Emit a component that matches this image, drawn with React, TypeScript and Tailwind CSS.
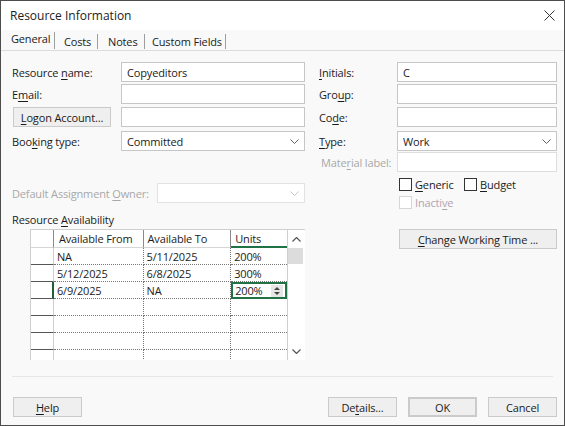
import React from "react";

const U = ({ children }: { children: React.ReactNode }) => (
  <span className="underline underline-offset-2">{children}</span>
);

const Chevron = ({ disabled }: { disabled?: boolean }) => (
  <svg width="9" height="5" viewBox="0 0 9 5" className="shrink-0">
    <path
      d="M0.5 0.5 L4.5 4.5 L8.5 0.5"
      fill="none"
      stroke={disabled ? "#c8c8c8" : "#606060"}
      strokeWidth="1"
    />
  </svg>
);

const Field = ({ value, className = "" }: { value?: string; className?: string }) => (
  <div
    className={`h-5 flex-1 flex items-center bg-white border border-[#c6c6c6] px-[5px] ${className}`}
  >
    {value}
  </div>
);

const Select = ({ value, disabled }: { value?: string; disabled?: boolean }) => (
  <div
    className={`h-5 flex-1 flex items-center justify-between bg-white border pl-[5px] pr-[5px] ${
      disabled ? "border-[#e2e2e2]" : "border-[#c6c6c6]"
    }`}
  >
    <span>{value}</span>
    <Chevron disabled={disabled} />
  </div>
);

const Btn = ({
  children,
  className = "",
}: {
  children: React.ReactNode;
  className?: string;
}) => (
  <div
    className={`h-5 flex items-center justify-center bg-[#efefef] border border-[#cbcbcb] ${className}`}
  >
    {children}
  </div>
);

const Check = ({ disabled }: { disabled?: boolean }) => (
  <div
    className={`w-[13px] h-[13px] bg-white border ${
      disabled ? "border-[#d6d6d6]" : "border-[#333]"
    }`}
  />
);

const rows: string[][] = [
  ["NA", "5/11/2025", "200%"],
  ["5/12/2025", "6/8/2025", "300%"],
  ["6/9/2025", "NA", "200%"],
  ["", "", ""],
  ["", "", ""],
  ["", "", ""],
  ["", "", ""],
];

const AvailabilityGrid = () => (
  <div className="ml-[18px] mt-[3px] w-[275px] h-[131px] flex border-l border-t border-[#cfcfcf] overflow-hidden">
    <div className="w-[257px] flex flex-col border-r border-[#cfcfcf] bg-white">
      <div className="h-[18px] flex shrink-0">
        <div className="w-[23px] border-r border-b border-r-[#8a8a8a] border-b-[#d6d6d6]" />
        <div className="w-[90px] px-[5px] flex items-center border-r border-b border-r-[#8a8a8a] border-b-[#d6d6d6]">
          Available From
        </div>
        <div className="w-[88px] px-[4px] flex items-center border-r border-b border-r-[#8a8a8a] border-b-[#d6d6d6]">
          Available To
        </div>
        <div className="w-[56px] px-[4px] flex items-center border-b-2 border-[#217346]">
          Units
        </div>
      </div>
      {rows.map((r, i) => (
        <div key={i} className="h-[17px] flex shrink-0">
          <div
            className={`w-[23px] border-b border-b-[#555] ${
              i === 2 ? "border-r-2 border-r-[#1f5f3a]" : "border-r border-r-[#cfcfcf]"
            }`}
          />
          <div className="w-[90px] px-[3px] flex items-center border-b border-r border-dotted border-[#777]">
            {r[0]}
          </div>
          <div className="w-[88px] px-[3px] flex items-center border-b border-r border-dotted border-[#777]">
            {r[1]}
          </div>
          {i === 2 ? (
            <div className="w-[56px] flex items-center justify-between border-2 border-[#217346] pl-[2px] pr-[2px]">
              <span>{r[2]}</span>
              <div className="w-[12px] h-[12px] bg-[#e6e6e6] flex flex-col items-center justify-center gap-[2px]">
                <svg width="6" height="3" viewBox="0 0 6 3">
                  <path d="M0 3 L3 0 L6 3 Z" fill="#444" />
                </svg>
                <svg width="6" height="3" viewBox="0 0 6 3">
                  <path d="M0 0 L3 3 L6 0 Z" fill="#444" />
                </svg>
              </div>
            </div>
          ) : (
            <div className="w-[56px] px-[3px] flex items-center border-b border-dotted border-[#777]">
              {r[2]}
            </div>
          )}
        </div>
      ))}
    </div>
    <div className="w-[18px] flex flex-col bg-white">
      <div className="h-[18px] flex items-center justify-center">
        <svg width="9" height="5" viewBox="0 0 9 5">
          <path d="M0.5 4.5 L4.5 0.5 L8.5 4.5" fill="none" stroke="#555" strokeWidth="1.2" />
        </svg>
      </div>
      <div className="h-[16px] w-[15px] bg-[#dcdcdc]" />
      <div className="flex-1" />
      <div className="h-[18px] flex items-center justify-center">
        <svg width="9" height="5" viewBox="0 0 9 5">
          <path d="M0.5 0.5 L4.5 4.5 L8.5 0.5" fill="none" stroke="#555" strokeWidth="1.2" />
        </svg>
      </div>
    </div>
  </div>
);

export default function App() {
  return (
    <div className="w-[565px] h-[426px] flex flex-col border border-[#4d4d4d] bg-[#f9f9f9] text-[11px] tracking-[-0.15px] text-[#1b1b1b] font-['Open_Sans',sans-serif] leading-none">
      {/* title bar */}
      <div className="h-[29px] shrink-0 bg-white flex items-center justify-between pl-[9px] pr-[9px]">
        <span className="text-[12px] tracking-normal text-[#222]">Resource Information</span>
        <svg width="11" height="11" viewBox="0 0 11 11">
          <path d="M0.5 0.5 L10.5 10.5 M10.5 0.5 L0.5 10.5" stroke="#333" strokeWidth="1" />
        </svg>
      </div>

      {/* tabs */}
      <div className="h-[21px] shrink-0 flex items-end pl-[5px] border-b border-[#dcdcdc]">
        <div className="w-[49px] h-[17px] pl-[5px] pt-[1px] mb-px border-r border-[#9e9e9e] self-end">
          General
        </div>
        <div className="w-[43px] h-[15px] pl-[9px] pt-[2px] border-r border-[#9e9e9e] mb-px">Costs</div>
        <div className="w-[47px] h-[15px] pl-[10px] pt-[2px] border-r border-[#9e9e9e] mb-px">Notes</div>
        <div className="w-[81px] h-[15px] pl-[7px] pt-[2px] border-r border-[#9e9e9e] mb-px">
          Custom Fields
        </div>
      </div>

      {/* general pane */}
      <div className="h-[325px] shrink-0 flex pt-[11px] pl-[11px]">
        <div className="w-[293px] flex flex-col">
          <div className="flex items-center">
            <span className="w-[109px]">
              Resource <U>n</U>ame:
            </span>
            <Field value="Copyeditors" />
          </div>
          <div className="flex items-center mt-[2px]">
            <span className="w-[109px]">
              E<U>m</U>ail:
            </span>
            <Field />
          </div>
          <div className="flex items-center mt-[3px]">
            <Btn className="ml-px w-[98px] mr-[10px]">
              <span>
                <U>L</U>ogon Account...
              </span>
            </Btn>
            <Field />
          </div>
          <div className="flex items-center mt-[4px]">
            <span className="w-[109px]">
              Boo<U>k</U>ing type:
            </span>
            <Select value="Committed" />
          </div>
          <div className="flex items-center mt-[32px] text-[#a8a8a8]">
            <span className="w-[145px]">
              Default Assignment <U>O</U>wner:
            </span>
            <Select disabled />
          </div>
          <div className="mt-[9px] h-[14px] flex items-center">
            <span>
              Resource <U>A</U>vailability
            </span>
          </div>
          <AvailabilityGrid />
        </div>

        <div className="w-[238px] ml-[14px] flex flex-col">
          <div className="flex items-center">
            <span className="w-[78px]">
              <U>I</U>nitials:
            </span>
            <Field value="C" />
          </div>
          <div className="flex items-center mt-[2px]">
            <span className="w-[78px]">
              Gro<U>u</U>p:
            </span>
            <Field />
          </div>
          <div className="flex items-center mt-[3px]">
            <span className="w-[78px]">
              Co<U>d</U>e:
            </span>
            <Field />
          </div>
          <div className="flex items-center mt-[4px]">
            <span className="w-[78px]">
              <U>T</U>ype:
            </span>
            <Select value="Work" />
          </div>
          <div className="flex items-center mt-[1px]">
            <span className="w-[78px] pl-[2px] text-[#a8a8a8]">
              Mate<U>r</U>ial label:
            </span>
            <Field className="border-[#dedede]" />
          </div>
          <div className="flex items-center mt-[6px] ml-[80px] h-[13px]">
            <div className="w-[65px] flex items-center gap-[3px]">
              <Check />
              <span>
                <U>G</U>eneric
              </span>
            </div>
            <div className="flex items-center gap-[3px]">
              <Check />
              <span>
                <U>B</U>udget
              </span>
            </div>
          </div>
          <div className="flex items-center mt-[5px] ml-[80px] h-[13px] gap-[3px] text-[#b0a4b0]">
            <Check disabled />
            <span>
              Inacti<U>v</U>e
            </span>
          </div>
          <Btn className="mt-[20px] ml-[80px] w-[158px]">
            <span>
              <U>C</U>hange Working Time ...
            </span>
          </Btn>
        </div>
      </div>

      <div className="h-px shrink-0 mx-[11px] bg-[#e6e6e6]" />

      {/* footer buttons */}
      <div className="flex-1 flex items-start pt-[20px] pl-[12px] pr-[7px]">
        <Btn className="w-[69px]">
          <span>
            <U>H</U>elp
          </span>
        </Btn>
        <div className="flex-1" />
        <Btn className="w-[69px]">
          <span>
            De<U>t</U>ails...
          </span>
        </Btn>
        <Btn className="w-[69px] ml-[11px] border-2 border-[#0078d7]">OK</Btn>
        <Btn className="w-[69px] ml-[11px]">Cancel</Btn>
      </div>
    </div>
  );
}
